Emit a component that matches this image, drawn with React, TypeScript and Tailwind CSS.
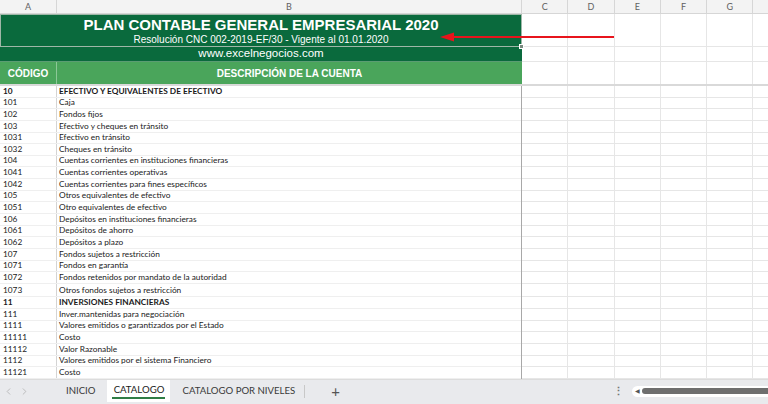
import React from "react";
import { ChevronLeft, ChevronRight } from "lucide-react";

type Row = { code: string; name: string; bold?: boolean; tall?: boolean };

const rows: Row[] = [
  { code: "10", name: "EFECTIVO Y EQUIVALENTES DE EFECTIVO", bold: true },
  { code: "101", name: "Caja" },
  { code: "102", name: "Fondos fijos" },
  { code: "103", name: "Efectivo y cheques en tránsito" },
  { code: "1031", name: "Efectivo en tránsito" },
  { code: "1032", name: "Cheques en tránsito" },
  { code: "104", name: "Cuentas corrientes en instituciones financieras" },
  { code: "1041", name: "Cuentas corrientes operativas" },
  { code: "1042", name: "Cuentas corrientes para fines específicos" },
  { code: "105", name: "Otros equivalentes de efectivo" },
  { code: "1051", name: "Otro equivalentes de efectivo" },
  { code: "106", name: "Depósitos en instituciones financieras" },
  { code: "1061", name: "Depósitos de ahorro" },
  { code: "1062", name: "Depósitos a plazo" },
  { code: "107", name: "Fondos sujetos a restricción" },
  { code: "1071", name: "Fondos en garantía" },
  { code: "1072", name: "Fondos retenidos por mandato de la autoridad" },
  { code: "1073", name: "Otros fondos sujetos a restricción", tall: true },
  { code: "11", name: "INVERSIONES FINANCIERAS", bold: true },
  { code: "111", name: "Inver.mantenidas para negociación" },
  { code: "1111", name: "Valores emitidos o garantizados por el Estado" },
  { code: "11111", name: "Costo" },
  { code: "11112", name: "Valor Razonable" },
  { code: "1112", name: "Valores emitidos por el sistema Financiero" },
  { code: "11121", name: "Costo" },
  { code: "", name: "" },
];

const extraCols = ["C", "D", "E", "F", "G", ""];

// celdas vacías a la derecha del panel congelado
function EmptyCells({ h, line = true }: { h: string; line?: boolean }) {
  return (
    <div className={`flex flex-1 ${h} ${line ? "border-b border-[#e6e6e6]" : ""}`}>
      {extraCols.map((c, i) => (
        <div key={i} className="w-[46.3px] shrink-0 border-r border-[#e6e6e6]" />
      ))}
    </div>
  );
}

export default function App() {
  return (
    <div className="w-[768px] h-[404px] overflow-hidden bg-white font-['Liberation_Sans',Arial,sans-serif]">
      <div className="relative h-[379px] overflow-hidden">
        {/* Cabecera de columnas */}
        <div className="flex h-[14px] bg-[#f3f3f3] border-b border-[#d6d6d6] text-[9px] text-[#616161] font-['Lato',sans-serif]">
          <div className="w-[57px] shrink-0 flex items-center justify-center border-r border-[#d6d6d6]">A</div>
          <div className="w-[465px] shrink-0 flex items-center justify-center border-r border-[#d6d6d6]">B</div>
          {extraCols.map((c, i) => (
            <div key={i} className="w-[46.3px] shrink-0 flex items-center justify-center border-r border-[#d6d6d6]">
              {c}
            </div>
          ))}
        </div>

        {/* Título */}
        <div className="flex">
          <div className="relative w-[522px] h-[33px] shrink-0 bg-[#0a6a3d] border border-[#9fb7a8] flex flex-col items-center text-white">
            <div className="text-[15px] font-bold leading-none mt-[2px]">PLAN CONTABLE GENERAL EMPRESARIAL 2020</div>
            <div className="text-[10px] leading-none mt-[3px]">Resolución CNC 002-2019-EF/30 - Vigente al 01.01.2020</div>
            <div className="absolute -right-[3px] -bottom-[3px] w-[5px] h-[5px] bg-[#7a8a80] border border-white" />
          </div>
          <EmptyCells h="h-[33px]" />
        </div>

        {/* Web */}
        <div className="flex">
          <div className="w-[522px] h-[15px] shrink-0 bg-[#0a6a3d] border-b border-[#5b9c73] flex items-center justify-center text-white text-[11.5px] leading-none">
            www.excelnegocios.com
          </div>
          <EmptyCells h="h-[15px]" />
        </div>

        {/* Encabezado tabla */}
        <div className="flex border-b-2 border-[#d9d9d9]">
          <div className="w-[57px] h-[22px] shrink-0 bg-[#4aa55b] border-r border-[#8cc897] flex items-center justify-center text-white text-[10px] font-bold">
            CÓDIGO
          </div>
          <div className="w-[465px] h-[22px] shrink-0 bg-[#4aa55b] flex items-center justify-center text-white text-[10px] font-bold">
            DESCRIPCIÓN DE LA CUENTA
          </div>
          <EmptyCells h="h-[22px]" line={false} />
        </div>

        {/* Filas */}
        <div className="flex">
          <div className="w-[522px] shrink-0 border-r border-[#a8a8a8] font-['Lato',sans-serif] text-[8.3px] text-[#1a1a1a]">
            {rows.map((r, i) => (
              <div
                key={i}
                className={`flex ${r.tall ? "h-[13.5px]" : "h-[11.65px]"} border-b border-[#efefef] ${r.bold ? "font-bold" : ""}`}
              >
                <div className="w-[57px] shrink-0 border-r border-[#d4d4d4] flex items-end pl-[3px] leading-[11px]">
                  {r.code}
                </div>
                <div className="flex-1 flex items-end pl-[2px] leading-[11px]">{r.name}</div>
              </div>
            ))}
          </div>
          <div className="flex-1">
            {rows.map((r, i) => (
              <EmptyCells key={i} h={r.tall ? "h-[13.5px]" : "h-[11.65px]"} />
            ))}
          </div>
        </div>

        {/* Flecha roja */}
        <svg className="absolute left-[438px] top-[31px]" width="180" height="12" viewBox="0 0 180 12">
          <line x1="12" y1="6" x2="176" y2="6" stroke="#e8141c" strokeWidth="2.2" />
          <polygon points="2,6 16,1.5 16,10.5" fill="#e8141c" />
        </svg>
      </div>

      {/* Barra de hojas */}
      <div className="flex h-[25px] bg-[#e9eaed] border-t border-[#dcdcdc] font-['Lato',sans-serif] text-[9.6px] text-[#3a3a3a]">
        <div className="flex items-center h-[22px]">
          <ChevronLeft size={11} strokeWidth={1.5} className="ml-[3px] text-[#a8a8a8]" />
          <ChevronRight size={11} strokeWidth={1.5} className="ml-[5px] text-[#a8a8a8]" />
          <span className="ml-[36px]">INICIO</span>
          <div className="ml-[12px] h-[22px] w-[63px] bg-white flex flex-col items-center justify-center text-[#1b1b1b]">
            <span className="leading-none mt-[2px]">CATALOGO</span>
            <span className="mt-[3px] h-[2px] w-[53px] bg-[#2f7d45]" />
          </div>
          <span className="ml-[12px]">CATALOGO POR NIVELES</span>
          <span className="ml-[9px] h-[13px] w-px bg-[#c8c8c8]" />
          <span className="ml-[26px] text-[15px] text-[#555] leading-none">+</span>
        </div>
        <div className="flex-1" />
        <div className="flex items-center h-[22px]">
          <span className="text-[#777] text-[11px] font-bold mr-[8px]">⋮</span>
          <div className="w-[136px] h-[11px] bg-white rounded-l-full flex items-center pl-[3px]">
            <span className="text-[6px] text-[#555] leading-none">◀</span>
            <div className="ml-[2px] flex-1 h-[6px] bg-[#6e6e6e] rounded-l-full" />
          </div>
        </div>
      </div>
    </div>
  );
}
